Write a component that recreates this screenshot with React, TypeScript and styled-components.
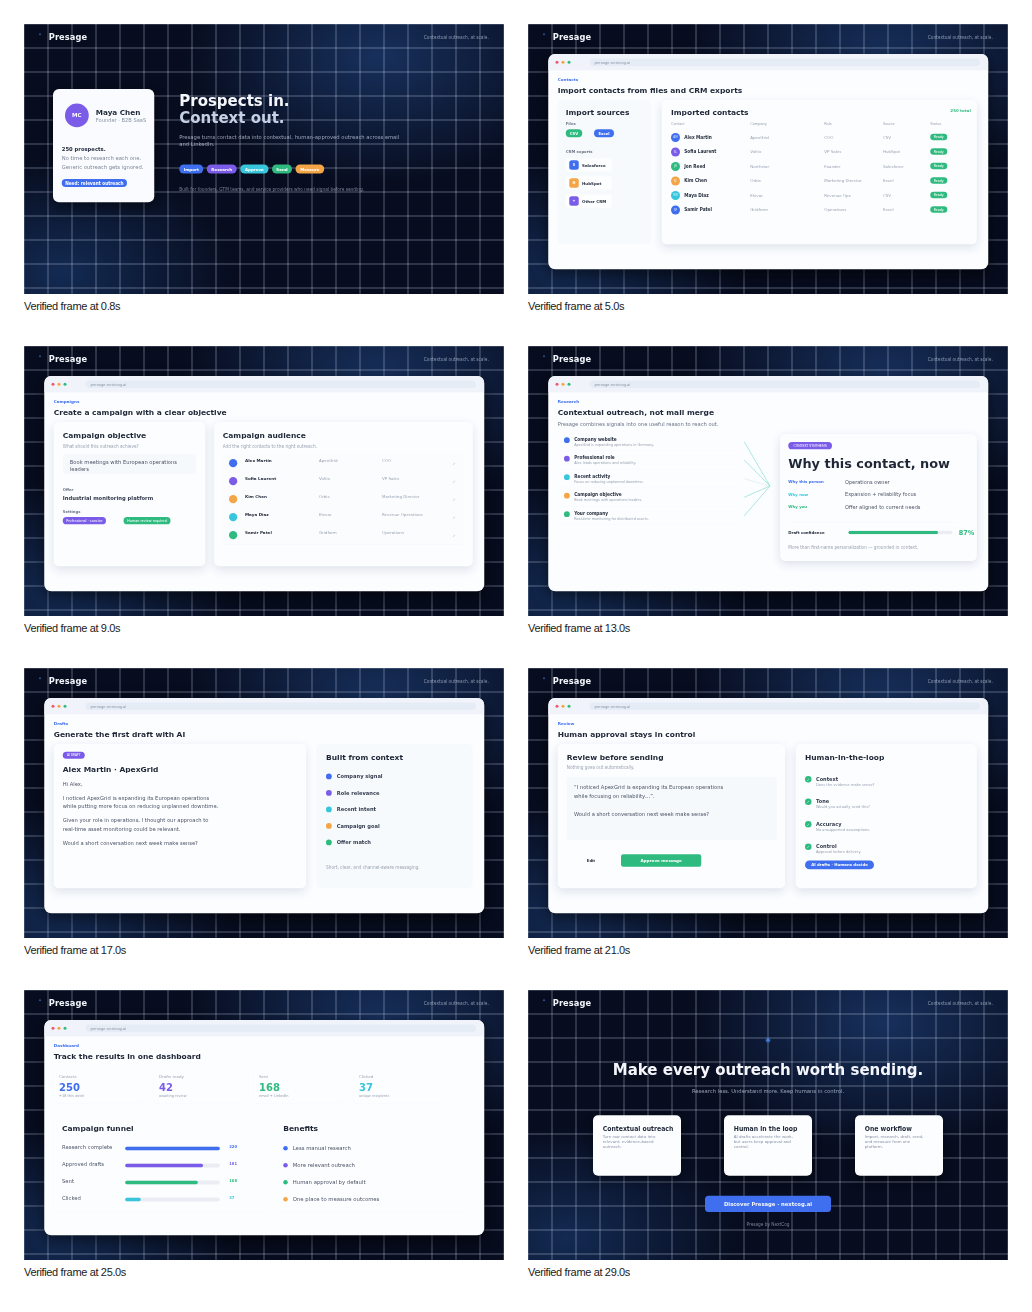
import React from 'react';
import styled, { createGlobalStyle } from 'styled-components';

const blue = '#3f6fef';
const purple = '#7a5ce8';
const cyan = '#38c6dc';
const green = '#2fbb7f';
const orange = '#f4a545';
const ink = '#1f2737';
const body = '#4a5365';
const muted = '#9aa3b2';

const GlobalStyle = createGlobalStyle`
  html, body {
    margin: 0;
    background: #fff;
  }
  * {
    box-sizing: border-box;
  }
`;

const Sheet = styled.div`
  display: grid;
  grid-template-columns: 480px 480px;
  column-gap: 24px;
  grid-auto-rows: 322px;
  padding: 24px;
`;

const Caption = styled.div`
  margin-top: 5px;
  font-family: 'Liberation Sans', Arial, sans-serif;
  font-size: 11px;
  line-height: 14px;
  letter-spacing: -0.35px;
  color: #1a1a1a;
`;

const Frame = styled.div`
  width: 480px;
  height: 270px;
  overflow: hidden;
  filter: blur(0.4px);
`;

// frames are authored at 1920x1080 and shrunk to the thumbnail
const Stage = styled.div`
  width: 1920px;
  height: 1080px;
  transform: scale(0.25);
  transform-origin: 0 0;
  font-family: 'DejaVu Sans', sans-serif;
  color: ${ink};
  background-color: #070c1e;
  background-image:
    linear-gradient(to right, rgba(205, 215, 238, 0.4) 0 4px, transparent 4px),
    linear-gradient(to bottom, rgba(205, 215, 238, 0.4) 0 4px, transparent 4px),
    radial-gradient(ellipse 800px 520px at 74% 12%, #17305c 0%, rgba(23, 48, 92, 0) 100%),
    radial-gradient(ellipse 700px 460px at 8% 92%, #132a52 0%, rgba(19, 42, 82, 0) 100%);
  background-size: 96px 96px, 96px 96px, 100% 100%, 100% 100%;
  background-position: -2px 0, 0 -2px, 0 0, 0 0;
`;

const TopBar = styled.div`
  height: 104px;
  padding: 0 61px 0 60px;
  display: flex;
  align-items: center;
  justify-content: space-between;
`;

const Brand = styled.div`
  display: flex;
  align-items: center;
  gap: 31px;
  font-size: 33px;
  font-weight: 700;
  letter-spacing: 0.4px;
  color: #f2f5fb;
`;

const BrandMark = styled.span`
  width: 8px;
  height: 8px;
  margin-bottom: 22px;
  border-radius: 50%;
  background: #2f5596;
`;

const Tagline = styled.div`
  font-size: 17.3px;
  color: rgba(205, 215, 235, 0.62);
`;

const Browser = styled.div`
  width: 1760px;
  height: 861px;
  margin: 16px 0 0 81px;
  border-radius: 28px;
  overflow: hidden;
  background: #fbfdff;
  box-shadow: 0 20px 60px rgba(0, 0, 0, 0.55);
`;

const TitleBar = styled.div`
  height: 65px;
  padding: 0 33px 0 29px;
  display: flex;
  align-items: center;
  background: #f0f4fa;
`;

const Light = styled.span<{ $c: string }>`
  width: 12px;
  height: 12px;
  margin-right: 12px;
  border-radius: 50%;
  background: ${p => p.$c};
`;

const UrlBar = styled.div`
  flex: 1;
  height: 30px;
  margin-left: 64px;
  padding-left: 20px;
  border-radius: 15px;
  background: #e5ecf5;
  font-size: 15px;
  line-height: 30px;
  color: #8a94a6;
`;

const Content = styled.div`
  padding: 0 46px 0 38px;
`;

const Head = styled.div`
  min-height: 119px;
  padding-top: 30px;
`;

const Eyebrow = styled.div`
  font-size: 16.5px;
  line-height: 18px;
  font-weight: 700;
  color: ${blue};
`;

const PageTitle = styled.div`
  margin-top: 15px;
  font-size: 30px;
  line-height: 34px;
  font-weight: 700;
  color: ${ink};
`;

const PageSub = styled.div`
  margin-top: 18px;
  font-size: 20.7px;
  line-height: 24px;
  color: #6b7484;
`;

const Panels = styled.div`
  display: flex;
  height: 577px;
`;

const Panel = styled.div<{ $w: number; $flat?: boolean; $pad: number; $top?: number }>`
  width: ${p => p.$w}px;
  flex: none;
  padding: ${p => p.$top ?? 34}px 24px 0 ${p => p.$pad}px;
  border-radius: 20px;
  background: ${p => (p.$flat ? '#f7fafd' : '#fcfdff')};
  box-shadow: ${p => (p.$flat ? 'none' : '0 12px 40px rgba(40, 60, 100, 0.13)')};
`;

const Spacer = styled.div<{ $w: number }>`
  width: ${p => p.$w}px;
  flex: none;
`;

const PanelTitle = styled.div`
  font-size: 30px;
  line-height: 36px;
  font-weight: 700;
  color: ${ink};
`;

const PanelSub = styled.div<{ $gap?: number }>`
  margin-top: ${p => p.$gap ?? 16}px;
  font-size: 17px;
  line-height: 20px;
  color: ${muted};
`;

const SmallHead = styled.div<{ $gap: number }>`
  margin-top: ${p => p.$gap}px;
  font-size: 15px;
  line-height: 18px;
  font-weight: 700;
  color: #6b7484;
`;

const Pill = styled.span<{ $c: string; $w?: number; $h?: number; $fs?: number; $weight?: number }>`
  display: inline-flex;
  align-items: center;
  justify-content: center;
  ${p => (p.$w ? `width: ${p.$w}px;` : 'padding: 0 14px;')}
  height: ${p => p.$h ?? 32}px;
  border-radius: 20px;
  background: ${p => p.$c};
  color: #fff;
  font-size: ${p => p.$fs ?? 16}px;
  font-weight: ${p => p.$weight ?? 700};
  white-space: nowrap;
`;

const PillRow = styled.div<{ $gap: number; $top: number }>`
  display: flex;
  gap: ${p => p.$gap}px;
  margin-top: ${p => p.$top}px;
`;

/* hero */

const HeroRow = styled.div`
  display: flex;
  gap: 100px;
  margin: 156px 0 0 116px;
`;

const PersonaCard = styled.div`
  width: 405px;
  height: 453px;
  flex: none;
  border-radius: 24px;
  background: #f9fbfe;
  box-shadow: 0 20px 50px rgba(0, 0, 0, 0.45);
`;

const Persona = styled.div`
  display: flex;
  align-items: center;
  gap: 28px;
  padding: 58px 0 0 48px;
`;

const PersonaAvatar = styled.div`
  width: 95px;
  height: 95px;
  border-radius: 50%;
  display: flex;
  align-items: center;
  justify-content: center;
  background: ${purple};
  color: #fff;
  font-size: 22px;
  font-weight: 700;
`;

const PersonaName = styled.div`
  font-size: 29px;
  line-height: 36px;
  font-weight: 700;
  color: ${ink};
`;

const PersonaRole = styled.div`
  font-size: 20.5px;
  line-height: 24px;
  margin-top: 2px;
  white-space: nowrap;
  color: #8a94a6;
`;

const PersonaBody = styled.div`
  padding: 74px 20px 0 35px;
`;

const PersonaLead = styled.div`
  font-size: 21px;
  line-height: 24px;
  font-weight: 700;
  color: ${ink};
  margin-bottom: 8px;
`;

const PersonaLine = styled.div`
  font-size: 21px;
  line-height: 35px;
  white-space: nowrap;
  color: #7d8697;
`;

const HeroText = styled.div`
  padding-top: 10px;
`;

const Headline = styled.div`
  font-size: 60px;
  line-height: 71px;
  font-weight: 700;
  color: #f4f6fb;
`;

const HeadlineDim = styled.div`
  font-size: 60px;
  line-height: 71px;
  font-weight: 700;
  color: #c6d0e4;
`;

const HeroCopy = styled.div`
  width: 900px;
  margin-top: 26px;
  font-size: 21px;
  line-height: 28px;
  color: rgba(205, 215, 235, 0.72);
`;

const HeroNote = styled.div`
  margin-top: 53px;
  font-size: 17.2px;
  line-height: 20px;
  color: rgba(205, 215, 235, 0.55);
`;

/* contacts */

const FileGap = styled.div`
  display: flex;
  gap: 47px;
  margin-top: 12px;
`;

const CrmList = styled.div`
  display: flex;
  flex-direction: column;
  gap: 20px;
  margin-top: 18px;
`;

const CrmItem = styled.div`
  width: 184px;
  height: 52px;
  padding-left: 14px;
  display: flex;
  align-items: center;
  gap: 13px;
  border-radius: 10px;
  background: #fdfeff;
  font-size: 16px;
  font-weight: 700;
  color: ${ink};
`;

const CrmIcon = styled.span<{ $c: string }>`
  width: 38px;
  height: 38px;
  border-radius: 10px;
  display: flex;
  align-items: center;
  justify-content: center;
  background: ${p => p.$c};
  color: #fff;
  font-size: 14px;
  font-weight: 700;
`;

const TitleRow = styled.div`
  display: flex;
  justify-content: space-between;
  align-items: flex-start;
`;

const TotalTag = styled.div`
  font-size: 16px;
  line-height: 26px;
  font-weight: 700;
  color: ${green};
`;

const TableGrid = styled.div<{ $top: number; $h: number }>`
  display: grid;
  grid-template-columns: 317px 296px 235px 189px 1fr;
  align-items: center;
  height: ${p => p.$h}px;
  margin-top: ${p => p.$top}px;
`;

const ColHead = styled.div`
  font-size: 14px;
  color: ${muted};
`;

const Cell = styled.div`
  font-size: 16px;
  color: ${muted};
`;

const ContactCell = styled.div`
  display: flex;
  align-items: center;
  gap: 17px;
  font-size: 17px;
  font-weight: 700;
  color: ${ink};
`;

const Avatar = styled.span<{ $c: string }>`
  width: 36px;
  height: 36px;
  margin-top: 3px;
  border-radius: 50%;
  display: flex;
  align-items: center;
  justify-content: center;
  background: ${p => p.$c};
  color: rgba(255, 255, 255, 0.8);
  font-size: 11px;
  font-weight: 400;
`;

/* campaign */

const ObjectiveBox = styled.div`
  width: 533px;
  height: 80px;
  margin-top: 23px;
  padding: 19px 28px 0;
  border-radius: 12px;
  background: #f6f9fc;
  font-size: 20.8px;
  line-height: 27px;
  color: ${body};
`;

const OfferValue = styled.div`
  margin-top: 10px;
  font-size: 21px;
  line-height: 26px;
  font-weight: 700;
  color: #30394a;
`;

const AudienceList = styled.div`
  margin-top: 23px;
  width: 960px;
`;

const AudienceRow = styled.div`
  display: grid;
  grid-template-columns: 64px 296px 252px 283px 1fr;
  height: 72px;
  padding-left: 25px;
  border-bottom: 1px solid #f2f5f9;
  background: #fbfcfe;
`;

const AudienceDot = styled.span<{ $c: string }>`
  width: 33px;
  height: 33px;
  margin-top: 19px;
  border-radius: 50%;
  background: ${p => p.$c};
`;

const AudienceName = styled.div`
  padding-top: 16px;
  font-size: 16.5px;
  line-height: 20px;
  font-weight: 700;
  color: ${ink};
`;

const AudienceText = styled.div`
  padding-top: 16px;
  font-size: 16px;
  line-height: 20px;
  color: ${muted};
`;

const AudienceCheck = styled.div`
  padding-top: 26px;
  font-size: 15px;
  line-height: 20px;
  color: ${muted};
`;

/* research */

const ResearchRow = styled.div`
  display: flex;
  margin-top: 21px;
`;

const Signals = styled.div`
  width: 729px;
  flex: none;
`;

const Signal = styled.div`
  height: 74px;
  padding: 20px 0 0 25px;
  display: flex;
  gap: 18px;
  border-bottom: 1px solid #f1f4f8;
`;

const SignalDot = styled.span<{ $c: string }>`
  width: 23px;
  height: 23px;
  flex: none;
  border-radius: 50%;
  background: ${p => p.$c};
`;

const SignalTitle = styled.div`
  margin-top: -2px;
  font-size: 17px;
  line-height: 20px;
  font-weight: 700;
  color: ${ink};
`;

const SignalDesc = styled.div`
  margin-top: 2px;
  font-size: 13.7px;
  line-height: 16px;
  color: ${muted};
`;

const Fan = styled.svg`
  width: 161px;
  height: 400px;
  flex: none;
`;

const ContextCard = styled.div`
  width: 786px;
  height: 507px;
  flex: none;
  margin-top: 8px;
  padding: 31px 0 0 32px;
  border-radius: 20px;
  background: #fcfdff;
  box-shadow: 0 12px 40px rgba(40, 60, 100, 0.15);
`;

const ContextTitle = styled.div`
  margin-top: 25px;
  font-size: 51.5px;
  line-height: 60px;
  font-weight: 700;
  white-space: nowrap;
  color: ${ink};
`;

const WhyGrid = styled.div`
  display: grid;
  grid-template-columns: 227px 1fr;
  row-gap: 26px;
  margin-top: 34px;
`;

const WhyLabel = styled.div<{ $c: string }>`
  font-size: 15.5px;
  line-height: 24px;
  font-weight: 700;
  color: ${p => p.$c};
`;

const WhyValue = styled.div`
  font-size: 20px;
  line-height: 24px;
  color: ${body};
`;

const Divider = styled.div`
  width: 675px;
  height: 1px;
  margin-top: 49px;
  background: #eef1f6;
`;

const ConfidenceRow = styled.div`
  display: grid;
  grid-template-columns: 240px 417px auto;
  column-gap: 0;
  align-items: center;
  height: 32px;
  margin-top: 24px;
`;

const ConfidenceLabel = styled.div`
  font-size: 15.5px;
  font-weight: 700;
  color: ${ink};
`;

const ConfidenceValue = styled.div`
  margin-left: 25px;
  font-size: 26px;
  font-weight: 700;
  color: ${green};
`;

const Track = styled.div<{ $h: number }>`
  height: ${p => p.$h}px;
  border-radius: ${p => p.$h / 2}px;
  overflow: hidden;
  background: #eaeef4;
`;

const Fill = styled.div<{ $c: string }>`
  height: 100%;
  border-radius: inherit;
  background: ${p => p.$c};
`;

const ContextNote = styled.div`
  margin-top: 34px;
  font-size: 17px;
  line-height: 20px;
  white-space: nowrap;
  color: ${muted};
`;

/* drafts */

const DraftName = styled.div`
  margin-top: 26px;
  font-size: 30px;
  line-height: 36px;
  font-weight: 700;
  color: ${ink};
`;

const DraftText = styled.div`
  margin-top: 22px;
  width: 720px;
  font-size: 20.8px;
  line-height: 34px;
  color: ${body};
`;

const ContextList = styled.div`
  display: flex;
  flex-direction: column;
  gap: 40px;
  margin-top: 46px;
`;

const ContextItem = styled.div`
  display: flex;
  align-items: center;
  gap: 20px;
  height: 26px;
  font-size: 20.5px;
  font-weight: 700;
  color: #343d4e;
`;

const ContextDot = styled.span<{ $c: string }>`
  width: 23px;
  height: 23px;
  border-radius: 50%;
  background: ${p => p.$c};
`;

/* review */

const QuoteBox = styled.div`
  width: 840px;
  height: 253px;
  margin-top: 26px;
  padding: 22px 29px 0;
  border-radius: 12px;
  background: #f6f9fc;
  font-size: 20.8px;
  line-height: 36px;
  color: ${body};
`;

const Actions = styled.div`
  display: flex;
  gap: 23px;
  margin-top: 57px;
`;

const EditButton = styled.div`
  width: 194px;
  height: 50px;
  display: flex;
  align-items: center;
  justify-content: center;
  font-size: 15px;
  font-weight: 700;
  color: ${ink};
`;

const ApproveButton = styled.div`
  width: 321px;
  height: 50px;
  display: flex;
  align-items: center;
  justify-content: center;
  border-radius: 9px;
  background: ${green};
  font-size: 16.5px;
  font-weight: 700;
  color: #fff;
`;

const LoopList = styled.div`
  display: flex;
  flex-direction: column;
  gap: 49px;
  margin: 58px 0 27px;
`;

const LoopItem = styled.div`
  display: flex;
  gap: 18px;
  height: 41px;
`;

const LoopCheck = styled.span`
  width: 26px;
  height: 26px;
  border-radius: 50%;
  display: flex;
  align-items: center;
  justify-content: center;
  background: ${green};
  color: #fff;
  font-size: 14px;
`;

const LoopTitle = styled.div`
  font-size: 20px;
  line-height: 22px;
  font-weight: 700;
  color: #343d4e;
`;

const LoopDesc = styled.div`
  margin-top: 3px;
  font-size: 14.5px;
  line-height: 16px;
  color: ${muted};
`;

/* dashboard */

const StatRow = styled.div`
  display: grid;
  grid-template-columns: repeat(4, 356px);
  column-gap: 44px;
  margin-top: 17px;
`;

const StatCard = styled.div`
  height: 133px;
  padding: 18px 0 0 21px;
  border-radius: 14px;
  background: #fcfdff;
  box-shadow: 0 0 0 1px #f5f7fa;
`;

const StatLabel = styled.div`
  font-size: 16px;
  line-height: 18px;
  color: ${muted};
`;

const StatValue = styled.div<{ $c: string }>`
  margin-top: 10px;
  font-size: 40px;
  line-height: 44px;
  font-weight: 700;
  color: ${p => p.$c};
`;

const StatNote = styled.div`
  margin-top: 2px;
  font-size: 14px;
  line-height: 16px;
  color: ${muted};
`;

const LowerRow = styled.div`
  display: flex;
  gap: 31px;
  margin-top: 40px;
`;

const LowerPanel = styled.div<{ $w: number; $pad: number }>`
  width: ${p => p.$w}px;
  height: 395px;
  padding: 43px 0 0 ${p => p.$pad}px;
  border-radius: 16px;
  background: #fcfdff;
  box-shadow: 0 0 0 1px #f6f8fb;
`;

const LowerTitle = styled.div`
  margin-bottom: 24px;
  font-size: 30px;
  line-height: 36px;
  font-weight: 700;
  color: ${ink};
`;

const FunnelRow = styled.div`
  display: grid;
  grid-template-columns: 252px 380px 37px auto;
  height: 68px;
  align-items: center;
`;

const FunnelLabel = styled.div`
  font-size: 21px;
  color: ${body};
  padding-bottom: 2px;
`;

const FunnelBar = styled(Track)`
  margin-top: 6px;
`;

const FunnelValue = styled.div<{ $c: string }>`
  grid-column: 4;
  padding-bottom: 8px;
  font-size: 15px;
  font-weight: 700;
  color: ${p => p.$c};
`;

const BenefitRow = styled.div`
  display: flex;
  align-items: center;
  gap: 20px;
  height: 68px;
  font-size: 21.3px;
  color: ${body};
`;

const BenefitDot = styled.span<{ $c: string }>`
  width: 18px;
  height: 18px;
  margin-top: 4px;
  border-radius: 50%;
  background: ${p => p.$c};
`;

/* closing */

const Closing = styled.div`
  display: flex;
  flex-direction: column;
  align-items: center;
`;

const ClosingMark = styled.span`
  width: 14px;
  height: 14px;
  margin-top: 90px;
  border-radius: 50%;
  background: #3f7fd8;
  box-shadow: 0 0 8px 2px rgba(63, 127, 216, 0.6);
`;

const ClosingTitle = styled.div`
  margin-top: 80px;
  font-size: 60px;
  line-height: 64px;
  font-weight: 700;
  white-space: nowrap;
  color: #f4f6fb;
`;

const ClosingSub = styled.div`
  margin-top: 39px;
  font-size: 21px;
  line-height: 24px;
  color: rgba(205, 215, 235, 0.72);
`;

const ClosingCards = styled.div`
  display: flex;
  gap: 172px;
  margin-top: 86px;
`;

const ClosingCard = styled.div`
  width: 352px;
  height: 242px;
  padding: 40px 58px 0 39px;
  border-radius: 20px;
  background: #fbfdff;
  box-shadow: 0 16px 40px rgba(0, 0, 0, 0.4);
`;

const ClosingCardTitle = styled.div`
  font-size: 24.5px;
  line-height: 28px;
  font-weight: 700;
  white-space: nowrap;
  color: ${ink};
`;

const ClosingCardText = styled.div`
  margin-top: 9px;
  font-size: 16px;
  line-height: 19px;
  color: #8a94a6;
`;

const Discover = styled.div`
  width: 504px;
  height: 65px;
  margin-top: 80px;
  display: flex;
  align-items: center;
  justify-content: center;
  border-radius: 14px;
  background: ${blue};
  color: #f4f6fb;
  font-size: 21px;
  font-weight: 700;
`;

const ClosingFoot = styled.div`
  margin-top: 42px;
  font-size: 17px;
  line-height: 18px;
  color: rgba(205, 215, 235, 0.55);
`;

const Header: React.FC = () => (
  <TopBar>
    <Brand>
      <BrandMark />
      Presage
    </Brand>
    <Tagline>Contextual outreach, at scale.</Tagline>
  </TopBar>
);

const Window: React.FC<{ eyebrow: string; title: string; sub?: string; children: React.ReactNode }> = ({
  eyebrow,
  title,
  sub,
  children,
}) => (
  <Browser>
    <TitleBar>
      <Light $c="#ef5a6f" />
      <Light $c={orange} />
      <Light $c={green} />
      <UrlBar>presage.nextcog.ai</UrlBar>
    </TitleBar>
    <Content>
      <Head>
        <Eyebrow>{eyebrow}</Eyebrow>
        <PageTitle>{title}</PageTitle>
        {sub && <PageSub>{sub}</PageSub>}
      </Head>
      {children}
    </Content>
  </Browser>
);

const contacts = [
  ['AM', 'Alex Martin', 'ApexGrid', 'COO', 'CSV', blue],
  ['SL', 'Sofia Laurent', 'Voltix', 'VP Sales', 'HubSpot', purple],
  ['JR', 'Jon Reed', 'Northstar', 'Founder', 'Salesforce', green],
  ['KC', 'Kim Chen', 'Orbis', 'Marketing Director', 'Excel', orange],
  ['MD', 'Maya Diaz', 'Elevar', 'Revenue Ops', 'CSV', cyan],
  ['SP', 'Samir Patel', 'Gridform', 'Operations', 'Excel', blue],
];

const audience = [
  ['Alex Martin', 'ApexGrid', 'COO', blue],
  ['Sofia Laurent', 'Voltix', 'VP Sales', purple],
  ['Kim Chen', 'Orbis', 'Marketing Director', orange],
  ['Maya Diaz', 'Elevar', 'Revenue Operations', cyan],
  ['Samir Patel', 'Gridform', 'Operations', green],
];

const signals = [
  ['Company website', 'ApexGrid is expanding operations in Germany.', blue],
  ['Professional role', 'Alex leads operations and reliability.', purple],
  ['Recent activity', 'Focus on reducing unplanned downtime.', cyan],
  ['Campaign objective', 'Book meetings with operations leaders.', orange],
  ['Your company', 'Real-time monitoring for distributed assets.', green],
];

const funnel = [
  ['Research complete', 220, 100, blue],
  ['Approved drafts', 181, 82, purple],
  ['Sent', 168, 76.5, green],
  ['Clicked', 37, 16.5, cyan],
] as const;

const HeroFrame = () => (
  <Stage>
    <Header />
    <HeroRow>
      <PersonaCard>
        <Persona>
          <PersonaAvatar>MC</PersonaAvatar>
          <div>
            <PersonaName>Maya Chen</PersonaName>
            <PersonaRole>Founder · B2B SaaS</PersonaRole>
          </div>
        </Persona>
        <PersonaBody>
          <PersonaLead>250 prospects.</PersonaLead>
          <PersonaLine>No time to research each one.</PersonaLine>
          <PersonaLine>Generic outreach gets ignored.</PersonaLine>
          <PillRow $gap={0} $top={31}>
            <Pill $c={blue} $w={261} $fs={17}>Need: relevant outreach</Pill>
          </PillRow>
        </PersonaBody>
      </PersonaCard>
      <HeroText>
        <Headline>Prospects in.</Headline>
        <HeadlineDim>Context out.</HeadlineDim>
        <HeroCopy>Presage turns contact data into contextual, human-approved outreach across email and LinkedIn.</HeroCopy>
        <PillRow $gap={14} $top={68}>
          <Pill $c={blue} $w={96} $h={36}>Import</Pill>
          <Pill $c={purple} $w={120} $h={36}>Research</Pill>
          <Pill $c={cyan} $w={113} $h={36}>Approve</Pill>
          <Pill $c={green} $w={80} $h={36}>Send</Pill>
          <Pill $c={orange} $w={115} $h={36}>Measure</Pill>
        </PillRow>
        <HeroNote>Built for founders, GTM teams, and service providers who need signal before sending.</HeroNote>
      </HeroText>
    </HeroRow>
  </Stage>
);

const ContactsFrame = () => (
  <Stage>
    <Header />
    <Window eyebrow="Contacts" title="Import contacts from files and CRM exports">
      <Panels>
        <Panel $w={376} $flat $pad={32} $top={31}>
          <PanelTitle>Import sources</PanelTitle>
          <SmallHead $gap={20}>Files</SmallHead>
          <FileGap>
            <Pill $c={green} $w={66} $fs={15}>CSV</Pill>
            <Pill $c={blue} $w={80} $fs={15}>Excel</Pill>
          </FileGap>
          <SmallHead $gap={49}>CRM exports</SmallHead>
          <CrmList>
            <CrmItem><CrmIcon $c={blue}>S</CrmIcon>Salesforce</CrmItem>
            <CrmItem><CrmIcon $c={orange}>H</CrmIcon>HubSpot</CrmItem>
            <CrmItem><CrmIcon $c={purple}>+</CrmIcon>Other CRM</CrmItem>
          </CrmList>
        </Panel>
        <Spacer $w={40} />
        <Panel $w={1260} $pad={37} $top={31}>
          <TitleRow>
            <PanelTitle>Imported contacts</PanelTitle>
            <TotalTag>250 total</TotalTag>
          </TitleRow>
          <TableGrid $top={17} $h={18}>
            <ColHead>Contact</ColHead>
            <ColHead>Company</ColHead>
            <ColHead>Role</ColHead>
            <ColHead>Source</ColHead>
            <ColHead>Status</ColHead>
          </TableGrid>
          {contacts.map(([initials, name, company, role, source, c], i) => (
            <TableGrid key={name} $top={i === 0 ? 17 : 0} $h={58}>
              <ContactCell><Avatar $c={c}>{initials}</Avatar>{name}</ContactCell>
              <Cell>{company}</Cell>
              <Cell>{role}</Cell>
              <Cell>{source}</Cell>
              <div><Pill $c={green} $w={68} $h={26} $fs={13} $weight={400}>Ready</Pill></div>
            </TableGrid>
          ))}
        </Panel>
      </Panels>
    </Window>
  </Stage>
);

const CampaignFrame = () => (
  <Stage>
    <Header />
    <Window eyebrow="Campaigns" title="Create a campaign with a clear objective">
      <Panels>
        <Panel $w={606} $pad={36}>
          <PanelTitle>Campaign objective</PanelTitle>
          <PanelSub>What should this outreach achieve?</PanelSub>
          <ObjectiveBox>Book meetings with European operations leaders</ObjectiveBox>
          <SmallHead $gap={54}>Offer</SmallHead>
          <OfferValue>Industrial monitoring platform</OfferValue>
          <SmallHead $gap={31}>Settings</SmallHead>
          <PillRow $gap={70} $top={14}>
            <Pill $c={purple} $w={173} $h={29} $fs={13.5} $weight={400}>Professional · concise</Pill>
            <Pill $c={green} $w={188} $h={29} $fs={13.5} $weight={400}>Human review required</Pill>
          </PillRow>
        </Panel>
        <Spacer $w={36} />
        <Panel $w={1034} $pad={34}>
          <PanelTitle>Campaign audience</PanelTitle>
          <PanelSub>Add the right contacts to the right outreach.</PanelSub>
          <AudienceList>
            {audience.map(([name, company, role, c]) => (
              <AudienceRow key={name}>
                <AudienceDot $c={c} />
                <AudienceName>{name}</AudienceName>
                <AudienceText>{company}</AudienceText>
                <AudienceText>{role}</AudienceText>
                <AudienceCheck>✓</AudienceCheck>
              </AudienceRow>
            ))}
          </AudienceList>
        </Panel>
      </Panels>
    </Window>
  </Stage>
);

const ResearchFrame = () => (
  <Stage>
    <Header />
    <Window
      eyebrow="Research"
      title="Contextual outreach, not mail merge"
      sub="Presage combines signals into one useful reason to reach out."
    >
      <ResearchRow>
        <Signals>
          {signals.map(([title, desc, c]) => (
            <Signal key={title}>
              <SignalDot $c={c} />
              <div>
                <SignalTitle>{title}</SignalTitle>
                <SignalDesc>{desc}</SignalDesc>
              </div>
            </Signal>
          ))}
        </Signals>
        <Fan viewBox="0 0 161 400">
          {[38, 111, 186, 260, 334].map((y, i) => (
            <line
              key={y}
              x1="17"
              y1={y}
              x2="120"
              y2="215"
              stroke={i === 2 ? '#d5ece8' : '#7fdccb'}
              strokeWidth="2.5"
            />
          ))}
        </Fan>
        <ContextCard>
          <Pill $c={purple} $w={175} $h={29} $fs={12.5} $weight={400}>CONTEXT SYNTHESIS</Pill>
          <ContextTitle>Why this contact, now</ContextTitle>
          <WhyGrid>
            <WhyLabel $c={blue}>Why this person</WhyLabel>
            <WhyValue>Operations owner</WhyValue>
            <WhyLabel $c={cyan}>Why now</WhyLabel>
            <WhyValue>Expansion + reliability focus</WhyValue>
            <WhyLabel $c={green}>Why you</WhyLabel>
            <WhyValue>Offer aligned to current needs</WhyValue>
          </WhyGrid>
          <Divider />
          <ConfidenceRow>
            <ConfidenceLabel>Draft confidence</ConfidenceLabel>
            <Track $h={14}><Fill $c={green} style={{ width: '86%' }} /></Track>
            <ConfidenceValue>87%</ConfidenceValue>
          </ConfidenceRow>
          <ContextNote>More than first-name personalization — grounded in context.</ContextNote>
        </ContextCard>
      </ResearchRow>
    </Window>
  </Stage>
);

const DraftFrame = () => (
  <Stage>
    <Header />
    <Window eyebrow="Drafts" title="Generate the first draft with AI">
      <Panels>
        <Panel $w={1009} $pad={36} $top={31}>
          <Pill $c={purple} $w={88} $h={28} $fs={12} $weight={400}>AI DRAFT</Pill>
          <DraftName>Alex Martin · ApexGrid</DraftName>
          <DraftText>Hi Alex,</DraftText>
          <DraftText>
            I noticed ApexGrid is expanding its European operations
            <br />
            while putting more focus on reducing unplanned downtime.
          </DraftText>
          <DraftText>
            Given your role in operations, I thought our approach to
            <br />
            real-time asset monitoring could be relevant.
          </DraftText>
          <DraftText>Would a short conversation next week make sense?</DraftText>
        </Panel>
        <Spacer $w={40} />
        <Panel $w={627} $flat $pad={40}>
          <PanelTitle>Built from context</PanelTitle>
          <ContextList>
            <ContextItem><ContextDot $c={blue} />Company signal</ContextItem>
            <ContextItem><ContextDot $c={purple} />Role relevance</ContextItem>
            <ContextItem><ContextDot $c={cyan} />Recent intent</ContextItem>
            <ContextItem><ContextDot $c={orange} />Campaign goal</ContextItem>
            <ContextItem><ContextDot $c={green} />Offer match</ContextItem>
          </ContextList>
          <PanelSub $gap={77}>Short, clear, and channel-aware messaging.</PanelSub>
        </Panel>
      </Panels>
    </Window>
  </Stage>
);

const ReviewFrame = () => (
  <Stage>
    <Header />
    <Window eyebrow="Review" title="Human approval stays in control">
      <Panels>
        <Panel $w={909} $pad={36}>
          <PanelTitle>Review before sending</PanelTitle>
          <PanelSub $gap={15}>Nothing goes out automatically.</PanelSub>
          <QuoteBox>
            “I noticed ApexGrid is expanding its European operations
            <br />
            while focusing on reliability…”.
            <br />
            <br />
            Would a short conversation next week make sense?
          </QuoteBox>
          <Actions>
            <EditButton>Edit</EditButton>
            <ApproveButton>Approve message</ApproveButton>
          </Actions>
        </Panel>
        <Spacer $w={43} />
        <Panel $w={724} $pad={37}>
          <PanelTitle>Human-in-the-loop</PanelTitle>
          <LoopList>
            {[
              ['Context', 'Does the evidence make sense?'],
              ['Tone', 'Would you actually send this?'],
              ['Accuracy', 'No unsupported assumptions.'],
              ['Control', 'Approval before delivery.'],
            ].map(([title, desc]) => (
              <LoopItem key={title}>
                <LoopCheck>✓</LoopCheck>
                <div>
                  <LoopTitle>{title}</LoopTitle>
                  <LoopDesc>{desc}</LoopDesc>
                </div>
              </LoopItem>
            ))}
          </LoopList>
          <Pill $c={blue} $w={276} $h={35} $fs={15.5}>AI drafts · Humans decide</Pill>
        </Panel>
      </Panels>
    </Window>
  </Stage>
);

const DashboardFrame = () => (
  <Stage>
    <Header />
    <Window eyebrow="Dashboard" title="Track the results in one dashboard">
      <StatRow>
        {[
          ['Contacts', '250', '+18 this week', blue],
          ['Drafts ready', '42', 'awaiting review', purple],
          ['Sent', '168', 'email + LinkedIn', green],
          ['Clicked', '37', 'unique recipients', cyan],
        ].map(([label, value, note, c]) => (
          <StatCard key={label}>
            <StatLabel>{label}</StatLabel>
            <StatValue $c={c}>{value}</StatValue>
            <StatNote>{note}</StatNote>
          </StatCard>
        ))}
      </StatRow>
      <LowerRow>
        <LowerPanel $w={860} $pad={33}>
          <LowerTitle>Campaign funnel</LowerTitle>
          {funnel.map(([label, value, pct, c]) => (
            <FunnelRow key={label}>
              <FunnelLabel>{label}</FunnelLabel>
              <FunnelBar $h={16}><Fill $c={c} style={{ width: `${pct}%` }} /></FunnelBar>
              <FunnelValue $c={c}>{value}</FunnelValue>
            </FunnelRow>
          ))}
        </LowerPanel>
        <LowerPanel $w={785} $pad={27}>
          <LowerTitle>Benefits</LowerTitle>
          <BenefitRow><BenefitDot $c={blue} />Less manual research</BenefitRow>
          <BenefitRow><BenefitDot $c={purple} />More relevant outreach</BenefitRow>
          <BenefitRow><BenefitDot $c={green} />Human approval by default</BenefitRow>
          <BenefitRow><BenefitDot $c={orange} />One place to measure outcomes</BenefitRow>
        </LowerPanel>
      </LowerRow>
    </Window>
  </Stage>
);

const ClosingFrame = () => (
  <Stage>
    <Header />
    <Closing>
      <ClosingMark />
      <ClosingTitle>Make every outreach worth sending.</ClosingTitle>
      <ClosingSub>Research less. Understand more. Keep humans in control.</ClosingSub>
      <ClosingCards>
        <ClosingCard>
          <ClosingCardTitle>Contextual outreach</ClosingCardTitle>
          <ClosingCardText>Turn raw contact data into relevant, evidence-based outreach.</ClosingCardText>
        </ClosingCard>
        <ClosingCard>
          <ClosingCardTitle>Human in the loop</ClosingCardTitle>
          <ClosingCardText>AI drafts accelerate the work, but users keep approval and control.</ClosingCardText>
        </ClosingCard>
        <ClosingCard>
          <ClosingCardTitle>One workflow</ClosingCardTitle>
          <ClosingCardText>Import, research, draft, send, and measure from one platform.</ClosingCardText>
        </ClosingCard>
      </ClosingCards>
      <Discover>Discover Presage · nextcog.ai</Discover>
      <ClosingFoot>Presage by NextCog</ClosingFoot>
    </Closing>
  </Stage>
);

const frames: [string, React.FC][] = [
  ['0.8s', HeroFrame],
  ['5.0s', ContactsFrame],
  ['9.0s', CampaignFrame],
  ['13.0s', ResearchFrame],
  ['17.0s', DraftFrame],
  ['21.0s', ReviewFrame],
  ['25.0s', DashboardFrame],
  ['29.0s', ClosingFrame],
];

const App: React.FC = () => (
  <>
    <GlobalStyle />
    <Sheet>
      {frames.map(([time, Shot]) => (
        <div key={time}>
          <Frame>
            <Shot />
          </Frame>
          <Caption>Verified frame at {time}</Caption>
        </div>
      ))}
    </Sheet>
  </>
);

export default App;
